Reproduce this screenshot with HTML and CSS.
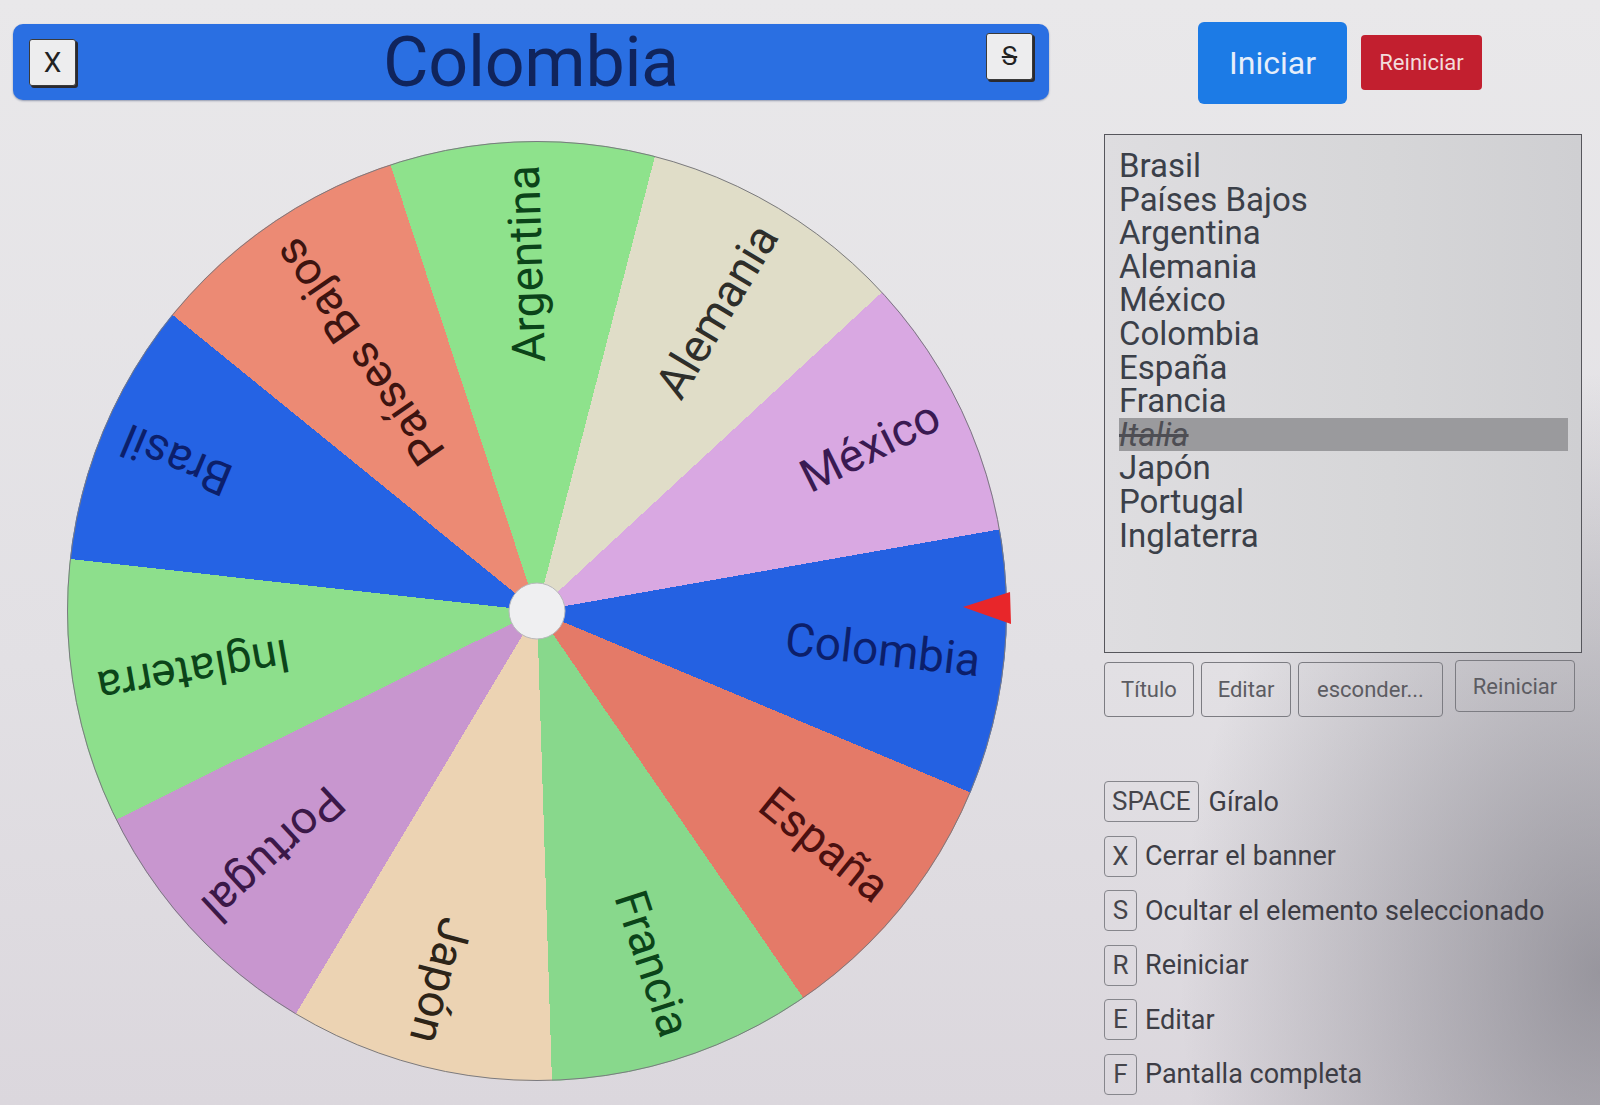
FILE: index.html
```html
<!DOCTYPE html>
<html lang="es">
<head>
<meta charset="utf-8">
<title>Ruleta</title>
<link rel="stylesheet" href="styles.css">
</head>
<body>
<div class="page">
  <div class="left">
    <div class="banner">
      <button class="banner-btn">X</button>
      <div class="banner-title">Colombia</div>
      <button class="banner-btn banner-btn-s"><s>S</s></button>
    </div>
    <div class="wheel">
      <svg class="wheel-svg" viewBox="0 0 940 940" width="940" height="940">
        <g class="labels" text-anchor="end" dominant-baseline="central">
          <text x="918" y="470" fill="#0c1f6b" transform="rotate(-157.27 470 470)">Brasil</text>
          <text x="916" y="470" fill="#3d1410" transform="rotate(-124.55 470 470)">Países Bajos</text>
          <text x="916" y="470" fill="#0b4419" transform="rotate(-91.82 470 470)">Argentina</text>
          <text x="916" y="470" fill="#2e2e2a" transform="rotate(-59.09 470 470)">Alemania</text>
          <text x="916" y="470" fill="#3a1a52" transform="rotate(-26.36 470 470)">México</text>
          <text x="916" y="470" fill="#0c1f6b" transform="rotate(6.36 470 470)">Colombia</text>
          <text x="916" y="470" fill="#4a1010" transform="rotate(39.09 470 470)">España</text>
          <text x="916" y="470" fill="#0b4419" transform="rotate(71.82 470 470)">Francia</text>
          <text x="916" y="470" fill="#2d2418" transform="rotate(104.55 470 470)">Japón</text>
          <text x="916" y="470" fill="#3b1848" transform="rotate(137.27 470 470)">Portugal</text>
          <text x="916" y="470" fill="#0b4419" transform="rotate(170 470 470)">Inglaterra</text>
        </g>
        <circle cx="470" cy="470" r="469.5" fill="none" stroke="#7a7a80" stroke-width="1"/>
        <circle cx="470" cy="470" r="28" fill="#efeff1" stroke="#b8b8bc" stroke-width="1"/>
        <polygon points="896,466 943,451 944,483" fill="#e8262a"/>
      </svg>
    </div>
  </div>
  <div class="right">
    <div class="top-actions">
      <button class="btn-start">Iniciar</button>
      <button class="btn-reset">Reiniciar</button>
    </div>
    <div class="entries">
      <div class="entry">Brasil</div>
      <div class="entry">Países Bajos</div>
      <div class="entry">Argentina</div>
      <div class="entry">Alemania</div>
      <div class="entry">México</div>
      <div class="entry">Colombia</div>
      <div class="entry">España</div>
      <div class="entry">Francia</div>
      <div class="entry entry-hidden">Italia</div>
      <div class="entry">Japón</div>
      <div class="entry">Portugal</div>
      <div class="entry">Inglaterra</div>
    </div>
    <div class="tools">
      <button class="tool tool-title">Título</button>
      <button class="tool tool-edit">Editar</button>
      <button class="tool tool-hide">esconder...</button>
      <button class="tool tool-reset">Reiniciar</button>
    </div>
    <ul class="shortcuts">
      <li class="shortcut"><kbd class="key">SPACE</kbd><span class="key-label label-wide">Gíralo</span></li>
      <li class="shortcut"><kbd class="key">X</kbd><span class="key-label">Cerrar el banner</span></li>
      <li class="shortcut"><kbd class="key">S</kbd><span class="key-label">Ocultar el elemento seleccionado</span></li>
      <li class="shortcut"><kbd class="key">R</kbd><span class="key-label">Reiniciar</span></li>
      <li class="shortcut"><kbd class="key">E</kbd><span class="key-label">Editar</span></li>
      <li class="shortcut"><kbd class="key">F</kbd><span class="key-label">Pantalla completa</span></li>
    </ul>
  </div>
</div>
</body>
</html>
```
FILE: styles.css
```css
html, body {
  margin: 0;
  height: 1105px;
  overflow: hidden;
}
body {
  font-family: Roboto, "Noto Sans", Arial, sans-serif;
  background:
    radial-gradient(ellipse 420px 600px at 100% 88%, rgba(95, 94, 104, 0.55), rgba(95, 94, 104, 0) 100%),
    linear-gradient(180deg, #e9e8ea 0%, #e2e0e4 60%, #dbd7dd 100%);
  color: #3b4049;
}
.page {
  display: flex;
  gap: 55px;
  padding: 22px 0 0 13px;
}
.left {
  width: 1036px;
  flex: none;
}
.banner {
  margin-top: 2px;
  height: 76px;
  background: #2a6fe2;
  border-radius: 10px;
  display: flex;
  align-items: center;
  padding: 0 16px;
  box-shadow: 0 1px 2px rgba(20, 40, 90, 0.4);
}
.banner-btn {
  width: 47px;
  height: 47px;
  flex: none;
  background: #ededee;
  border: 1px solid #3a3a3a;
  border-radius: 3px;
  box-shadow: 2px 2px 0 #2a2a30;
  font-family: Roboto, Arial, sans-serif;
  font-size: 28px;
  color: #222;
  padding: 0;
  display: flex;
  align-items: center;
  justify-content: center;
}
.banner-btn-s {
  margin-top: -12px;
  font-size: 26px;
}
.banner-title {
  flex: 1;
  text-align: center;
  font-size: 70px;
  line-height: 76px;
  color: #10245c;
  letter-spacing: -0.3px;
}
.wheel {
  margin: 41px 0 0 54px;
  width: 940px;
  height: 940px;
  border-radius: 50%;
  background: conic-gradient(from -83.64deg,
    #2563e4 0deg 32.727deg,
    #ec8a74 32.727deg 65.455deg,
    #8ee28c 65.455deg 98.182deg,
    #e0ddc8 98.182deg 130.909deg,
    #d9a8e2 130.909deg 163.636deg,
    #2461e2 163.636deg 196.364deg,
    #e47a68 196.364deg 229.091deg,
    #88d88c 229.091deg 261.818deg,
    #ecd3b3 261.818deg 294.545deg,
    #c896cf 294.545deg 327.273deg,
    #8ddf8c 327.273deg 360deg);
}
.wheel-svg {
  display: block;
  overflow: visible;
}
.labels text {
  font-family: Roboto, Arial, sans-serif;
  font-size: 46px;
}
.right {
  width: 478px;
  flex: none;
}
.top-actions {
  height: 82px;
  display: flex;
  align-items: center;
  justify-content: center;
  gap: 14px;
  padding-right: 6px;
}
.btn-start {
  width: 149px;
  height: 82px;
  background: #1c7be6;
  border: none;
  border-radius: 6px;
  color: #e6eefa;
  font-family: Roboto, Arial, sans-serif;
  font-size: 32px;
  padding: 0;
}
.btn-reset {
  width: 121px;
  height: 55px;
  background: #c21f2f;
  border: none;
  border-radius: 4px;
  color: #f2dcdc;
  font-family: Roboto, Arial, sans-serif;
  font-size: 22px;
  padding: 0;
  margin-top: -2px;
}
.entries {
  margin-top: 30px;
  height: 519px;
  box-sizing: border-box;
  border: 1px solid #56565c;
  background: linear-gradient(90deg, #dedde0 0%, #d6d6d8 60%, #cfcfd2 100%);
  padding: 14px 13px 0 14px;
}
.entry {
  font-size: 33px;
  line-height: 33.6px;
  height: 33.6px;
  color: #3b4049;
  white-space: nowrap;
}
.entry-hidden {
  background: #9a9a9d;
  font-style: italic;
  text-decoration: line-through;
  color: #4e4e54;
}
.tools {
  margin-top: 9px;
  display: flex;
  align-items: flex-start;
  gap: 7px;
}
.tool {
  height: 55px;
  background: transparent;
  border: 1px solid #7c7c82;
  border-radius: 4px;
  font-family: Roboto, Arial, sans-serif;
  font-size: 22px;
  color: #5c5c62;
  padding: 0;
}
.tool-title { width: 90px; }
.tool-edit { width: 90px; }
.tool-hide { width: 145px; }
.tool-reset {
  width: 120px;
  height: 52px;
  margin-left: 5px;
  margin-top: -2px;
}
.shortcuts {
  list-style: none;
  margin: 64px 0 0;
  padding: 0;
  display: flex;
  flex-direction: column;
  gap: 13.5px;
}
.shortcut {
  display: flex;
  align-items: center;
  height: 41px;
}
.key {
  box-sizing: border-box;
  min-width: 33px;
  height: 41px;
  padding: 0 7px;
  border: 1px solid #86868c;
  border-radius: 4px;
  font-family: Roboto, Arial, sans-serif;
  font-size: 26px;
  line-height: 39px;
  text-align: center;
  color: #45454b;
}
.key-label {
  margin-left: 8px;
  font-size: 27px;
  color: #3d3d45;
}
.label-wide {
  margin-left: 10px;
}
```
